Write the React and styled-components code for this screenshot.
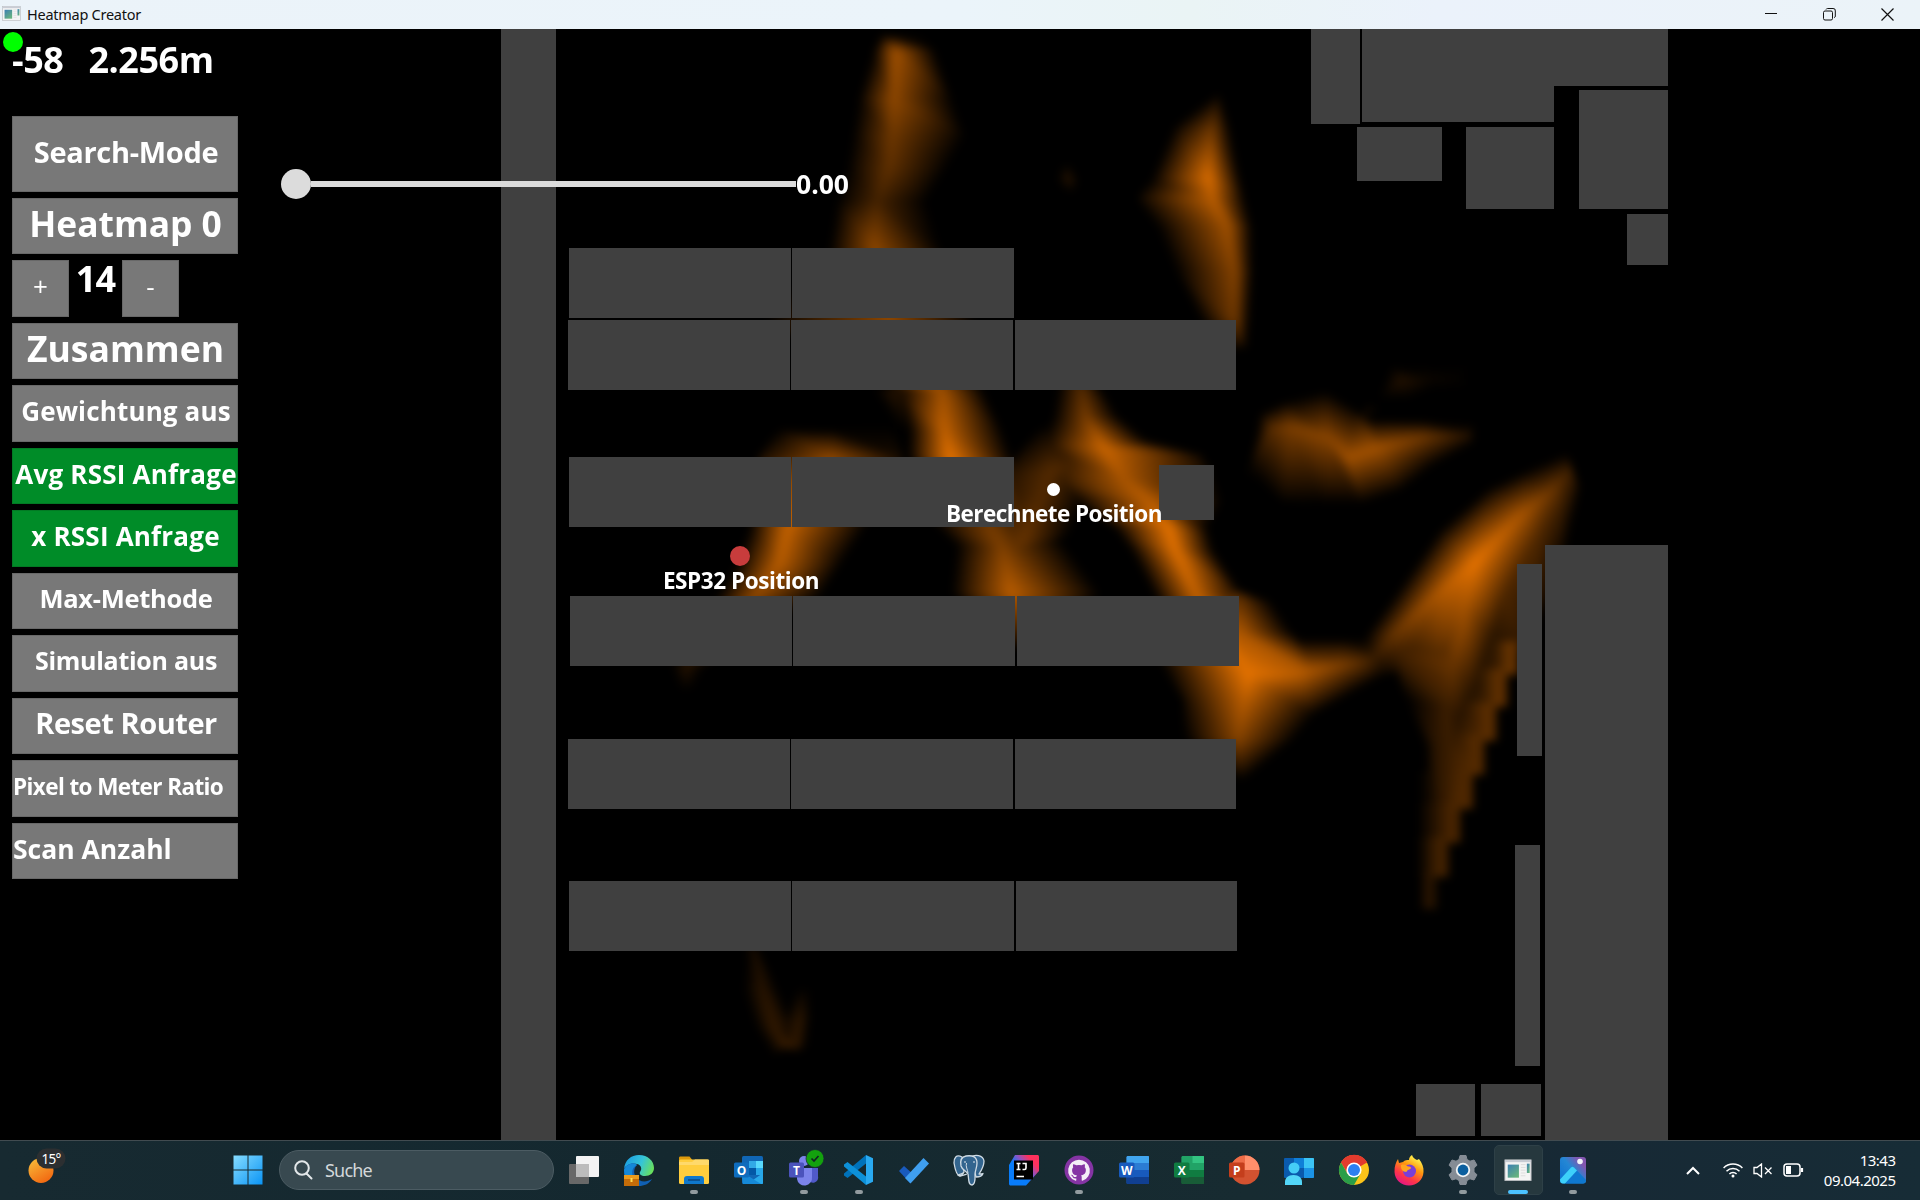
import React, { useLayoutEffect, useRef } from "react";
import styled, { createGlobalStyle, css } from "styled-components";

const Global = createGlobalStyle`
  * { box-sizing: border-box; }
  html, body { margin: 0; background: #000; overflow: hidden; }
`;

const Desktop = styled.div`
  width: 1920px;
  height: 1200px;
  display: flex;
  flex-direction: column;
  background: #000;
  font-family: "Open Sans", "Noto Sans", sans-serif;
`;

/* ---------- title bar ---------- */

const TitleBar = styled.header`
  height: 29px;
  flex: none;
  display: flex;
  align-items: center;
  padding: 0 3px 1px 2px;
  background: linear-gradient(90deg, #ebf3f9 0%, #ebf4fa 50%, #eaf4f5 62%, #ebf2fb 75%, #ebf3f8 100%);
`;

const Title = styled.span`
  flex: 1;
  margin-left: 6px;
  font: 400 14.5px "Noto Sans", sans-serif;
  letter-spacing: -0.26px;
  color: #111;
`;

const WindowButton = styled.div`
  width: 58.5px;
  height: 29px;
  display: flex;
  align-items: center;
  justify-content: center;
`;

/* ---------- workspace ---------- */

const Workspace = styled.main`
  position: relative;
  height: 1111px;
  flex: none;
  display: flex;
  overflow: hidden;
  background: #000;
`;

const Sidebar = styled.aside`
  position: relative;
  width: 239px;
  padding: 0 0 0 12px;
  display: flex;
  flex-direction: column;
  gap: 6px;
  color: #fff;
  font-weight: 700;
`;

const Readout = styled.div`
  height: 81px;
  display: flex;
  gap: 25px;
  font-size: 36px;
  line-height: 61px;
  font-weight: 700;
  letter-spacing: -0.45px;
`;

const Button = styled.div`
  width: ${(p) => p.$w || 226}px;
  height: ${(p) => p.$h || 56.5}px;
  flex: none;
  display: flex;
  align-items: center;
  justify-content: ${(p) => (p.$left ? "flex-start" : "center")};
  padding: 0 0 ${(p) => p.$lift ?? 5}px ${(p) => p.$pad || 0}px;
  border: 1px solid ${(p) => (p.$on ? "#027a24" : "#686868")};
  background: ${(p) => (p.$on ? "#008c28" : "#787878")};
  font-size: ${(p) => p.$fs}px;
  font-weight: ${(p) => p.$weight || 700};
  letter-spacing: ${(p) => p.$ls || 0}px;
  line-height: 1;
  white-space: nowrap;
`;

const Stepper = styled.div`
  display: flex;
  height: 56.5px;
  flex: none;
`;

const StepValue = styled.span`
  width: 53px;
  text-align: center;
  font-size: 36px;
  line-height: 37px;
  letter-spacing: -0.8px;
`;

const Slider = styled.div`
  position: absolute;
  left: 281px;
  top: 139px;
  display: flex;
  align-items: center;
  height: 32px;
`;

const Knob = styled.div`
  width: 30px;
  height: 30px;
  border-radius: 50%;
  background: #dcdcdc;
`;

const Track = styled.div`
  width: 485px;
  height: 6px;
  background: #dcdcdc;
`;

const SliderValue = styled.span`
  color: #fff;
  font-size: 26.5px;
  font-weight: 700;
  line-height: 30px;
  letter-spacing: 0;
`;

const Dot = styled.div`
  position: absolute;
  left: ${(p) => p.$x - p.$r}px;
  top: ${(p) => p.$y - p.$r - 29}px;
  width: ${(p) => p.$r * 2}px;
  height: ${(p) => p.$r * 2}px;
  border-radius: 50%;
  background: ${(p) => p.$c};
`;

const MarkerLabel = styled.span`
  position: absolute;
  left: ${(p) => p.$x}px;
  top: ${(p) => p.$y - 29}px;
  transform: translate(-50%, -50%);
  color: #fff;
  font-size: 22.5px;
  font-weight: 700;
  letter-spacing: ${(p) => p.$ls}px;
  white-space: nowrap;
`;

const Wall = styled.div`
  position: absolute;
  left: ${(p) => p.$b[0]}px;
  top: ${(p) => p.$b[1] - 29}px;
  width: ${(p) => p.$b[2] - p.$b[0]}px;
  height: ${(p) => p.$b[3] - p.$b[1]}px;
  background: #404040;
`;

const HeatCanvas = styled.canvas`
  position: absolute;
  left: 0;
  top: 0;
  filter: blur(4px);
`;

/* [left, top, right, bottom] in window pixels */
const walls = [
  [501, 29, 556, 1140],
  [569, 248, 791, 317.5], [792, 248, 1014, 317.5],
  [568, 320, 790, 390], [791, 320, 1013, 390], [1015, 320, 1236, 390],
  [569, 457, 791, 527], [792, 457, 1014, 527], [1159, 465, 1214, 520],
  [570, 596, 792, 665.5], [793, 596, 1015, 665.5], [1017, 596, 1239, 665.5],
  [568, 739, 790, 809], [791, 739, 1013, 809], [1015, 739, 1236, 809],
  [569, 881, 791, 951], [792, 881, 1014, 951], [1016, 881, 1237, 951],
  [1311, 29, 1360, 124], [1362, 29, 1554, 122], [1553, 29, 1668, 86],
  [1357, 127, 1442, 181], [1466, 127, 1554, 209], [1579, 90, 1668, 209],
  [1627, 214, 1668, 265], [1544.5, 545, 1668, 1140], [1517, 564, 1542, 756],
  [1515, 845, 1540, 1066], [1416, 1084, 1475, 1136], [1481, 1084, 1541, 1136],
];

/* Signal samples: each strip is a list of rows, each row a list of [x, y, strength] */
const strips = [
  [
    [[880, 34, 0], [893, 36, 0.1], [926, 36, 0]],
    [[872, 50, 0], [894, 50, 0.7], [934, 48, 0]],
    [[857, 98, 0], [892, 98, 0.62], [952, 98, 0]],
    [[851, 135, 0], [891, 135, 0.48], [965, 135, 0]],
    [[846, 165, 0], [888, 165, 0.42], [948, 165, 0]],
    [[836, 200, 0], [876, 200, 0.3], [926, 200, 0]],
    [[828, 247, 0], [873, 245, 0.6], [940, 247, 0]],
    [[762, 320, 0], [888, 320, 0.62], [974, 320, 0]],
    [[896, 390, 0], [941, 390, 0.7], [983, 390, 0]],
    [[908, 430, 0], [943, 430, 0.84], [1002, 430, 0]],
    [[907, 457, 0], [949, 458, 1], [1012, 457, 0]],
    [[930, 520, 0], [985, 520, 0.5], [1040, 520, 0]],
    [[955, 545, 0], [1000, 545, 0.55], [1065, 545, 0]],
    [[950, 592, 0], [1010, 592, 0.8], [1100, 592, 0]],
    [[980, 645, 0], [1016, 645, 0.1], [1050, 645, 0]],
  ],
  [[[872, 388, 0], [890, 388, 0.16], [912, 388, 0.1]], [[890, 430, 0], [900, 430, 0], [915, 430, 0]]],
  [
    [[778, 428, 0], [832, 430, 0.02], [890, 424, 0]],
    [[757, 457, 0.1], [832, 457, 0.62], [902, 457, 0.1]],
    [[752, 490, 0], [800, 490, 0.85], [890, 490, 0]],
    [[748, 527, 0], [786, 527, 0.85], [865, 527, 0]],
    [[736, 562, 0], [778, 562, 0.8], [842, 562, 0]],
    [[716, 595, 0], [754, 595, 0.62], [820, 595, 0]],
    [[670, 665, 0], [685, 665, 0.16], [705, 665, 0]],
    [[672, 690, 0], [680, 690, 0], [690, 690, 0]],
  ],
  [
    [[1040, 425, 0], [1065, 435, 0.1], [1095, 430, 0.2]],
    [[1000, 475, 0.12], [1050, 470, 0.36], [1085, 460, 0.25]],
    [[995, 500, 0.15], [1040, 500, 0.36], [1085, 500, 0]],
    [[980, 535, 0.3], [1020, 545, 0.45], [1068, 535, 0]],
  ],
  [
    [[1058, 380, 0], [1079, 380, 0.33], [1096, 380, 0]],
    [[1052, 415, 0], [1085, 415, 0.52], [1117, 415, 0]],
    [[1038, 445, 0], [1102, 446, 0.88], [1147, 440, 0]],
    [[1032, 475, 0], [1122, 477, 0.74], [1200, 455, 0.1]],
    [[1074, 500, 0], [1150, 502, 0.82], [1222, 500, 0]],
    [[1114, 528, 0], [1168, 527, 1], [1207, 528, 0]],
    [[1130, 550, 0], [1175, 550, 0.97], [1213, 550, 0]],
    [[1154, 596, 0], [1196, 596, 0.85], [1244, 596, 0]],
    [[1160, 665, 0], [1243, 665, 1], [1300, 645, 0]],
  ],
  [[[1155, 444, 0], [1180, 450, 0], [1212, 455, 0]], [[1155, 468, 0.38], [1185, 468, 0.3], [1218, 468, 0]]],
  [
    [[1190, 590, 0.2], [1239, 592, 0.35], [1272, 602, 0]],
    [[1190, 630, 0.6], [1240, 632, 0.75], [1292, 632, 0]],
    [[1160, 664, 0], [1247, 674, 1], [1310, 670, 0.72]],
    [[1184, 700, 0.1], [1243, 700, 0.8], [1328, 697, 0]],
    [[1184, 738, 0], [1237, 738, 0.58], [1294, 738, 0]],
    [[1225, 780, 0], [1239, 780, 0], [1246, 777, 0]],
  ],
  [
    [[1245, 615, 0], [1245, 674, 1], [1240, 740, 0]],
    [[1290, 638, 0], [1298, 672, 0.82], [1312, 715, 0]],
    [[1345, 638, 0], [1340, 664, 0.55], [1352, 692, 0]],
    [[1382, 642, 0.1], [1380, 656, 0.2], [1388, 672, 0]],
  ],
  [
    [[1216, 92, 0], [1219, 92, 0], [1223, 95, 0]],
    [[1173, 125, 0], [1211, 130, 0.5], [1229, 125, 0]],
    [[1150, 178, 0], [1208, 177, 0.94], [1239, 175, 0]],
    [[1137, 197, 0.05], [1212, 197, 0.82], [1244, 197, 0]],
    [[1155, 225, 0], [1227, 225, 0.7], [1251, 225, 0]],
    [[1174, 270, 0], [1234, 270, 0.58], [1252, 270, 0]],
    [[1200, 320, 0], [1234, 320, 0.48], [1249, 320, 0]],
    [[1225, 350, 0], [1238, 345, 0.12], [1246, 350, 0]],
  ],
  [[[1060, 165, 0], [1068, 162, 0], [1076, 165, 0]], [[1056, 180, 0], [1068, 178, 0.17], [1078, 180, 0]], [[1062, 192, 0], [1068, 192, 0], [1074, 190, 0]]],
  [
    [[1254, 440, 0], [1250, 462, 0.06], [1244, 474, 0]],
    [[1259, 412, 0], [1270, 427, 0.38], [1264, 486, 0]],
    [[1285, 400, 0], [1290, 426, 0.54], [1282, 500, 0.03]],
    [[1325, 390, 0], [1326, 436, 0.6], [1322, 503, 0]],
    [[1354, 410, 0.05], [1346, 457, 0.7], [1360, 503, 0]],
    [[1372, 421, 0.05], [1376, 447, 0.7], [1400, 490, 0]],
    [[1425, 420, 0], [1422, 436, 0.48], [1434, 464, 0]],
    [[1474, 424, 0], [1470, 434, 0.15], [1474, 442, 0]],
  ],
  [[[1355, 418, 0], [1368, 402, 0], [1378, 400, 0]], [[1362, 422, 0], [1368, 412, 0.13], [1380, 408, 0]]],
  [
    [[1378, 395, 0], [1380, 398, 0], [1385, 402, 0]],
    [[1390, 365, 0], [1400, 379, 0.15], [1408, 398, 0]],
    [[1425, 365, 0], [1430, 378, 0.05], [1430, 388, 0]],
    [[1470, 362, 0], [1460, 376, 0.02], [1470, 386, 0]],
  ],
  [
    [[1566, 452, 0], [1571, 468, 0.25], [1575, 478, 0.17], [1579, 490, 0]],
    [[1524, 470, 0], [1550, 490, 0.48], [1561, 505, 0.25], [1570, 528, 0]],
    [[1486, 488, 0], [1520, 514, 0.74], [1537, 535, 0.35], [1562, 565, 0]],
    [[1438, 530, 0], [1474, 561, 1], [1505, 590, 0.34], [1540, 610, 0.12]],
    [[1415, 590, 0.2], [1464, 607, 0.72], [1492, 635, 0.18], [1520, 650, 0.2]],
    [[1390, 650, 0.25], [1452, 665, 0.45], [1473, 690, 0.16], [1505, 675, 0.3]],
    [[1406, 700, 0], [1446, 705, 0.26], [1456, 720, 0.17], [1486, 720, 0.36]],
    [[1424, 745, 0], [1434, 745, 0.18], [1450, 750, 0.26], [1472, 760, 0.36]],
    [[1424, 810, 0], [1434, 810, 0.14], [1444, 810, 0.24], [1455, 810, 0.34]],
  ],
  [
    [[1438, 530, 0], [1474, 561, 1], [1464, 607, 0.72]],
    [[1400, 585, 0], [1440, 590, 0.78], [1440, 650, 0.4]],
    [[1365, 634, 0], [1396, 630, 0.48], [1400, 670, 0.1]],
    [[1348, 655, 0], [1374, 655, 0.25], [1362, 678, 0]],
  ],
  [
    [[745, 940, 0], [751, 945, 0.12], [756, 945, 0]],
    [[743, 990, 0], [762, 990, 0.18], [776, 985, 0]],
    [[754, 1025, 0], [774, 1028, 0.22], [786, 1020, 0.08]],
    [[772, 1054, 0], [788, 1043, 0.28], [802, 1056, 0]],
  ],
  [
    [[798, 985, 0], [806, 990, 0.02], [812, 985, 0]],
    [[784, 1020, 0.04], [799, 1020, 0.2], [810, 1015, 0]],
    [[782, 1048, 0.22], [794, 1048, 0.22], [806, 1046, 0]],
  ],
];

/* Lower right edge of the covered area, one sampled row per step: [left, right, top, bottom] */
const steps = [
  [1482, 1517, 640, 673], [1464, 1506, 668, 706], [1444, 1495, 702, 739], [1426, 1483, 735, 774],
  [1418, 1472, 770, 807], [1417, 1459, 803, 841], [1416, 1447, 837, 875], [1418, 1435, 871, 907],
];

const stepStrips = steps.map(([l, r, t, b], i) => {
  const v = 0.45 - i * 0.025 - (i === 7 ? 0.1 : 0);
  return [t, b].map((y) => [[l, y, 0], [r - 9, y, v], [r - 1, y, v * 0.85], [r + 2, y, 0]]);
});

const W = 960;
const H = 556;

function fillTriangle(field, a, b, c) {
  const [ax, ay, av] = [a[0] / 2, (a[1] - 29) / 2, a[2]];
  const [bx, by, bv] = [b[0] / 2, (b[1] - 29) / 2, b[2]];
  const [cx, cy, cv] = [c[0] / 2, (c[1] - 29) / 2, c[2]];
  const det = (by - cy) * (ax - cx) + (cx - bx) * (ay - cy);
  if (Math.abs(det) < 1e-6) return;
  const x0 = Math.max(0, Math.floor(Math.min(ax, bx, cx)));
  const x1 = Math.min(W - 1, Math.ceil(Math.max(ax, bx, cx)));
  const y0 = Math.max(0, Math.floor(Math.min(ay, by, cy)));
  const y1 = Math.min(H - 1, Math.ceil(Math.max(ay, by, cy)));
  for (let y = y0; y <= y1; y++) {
    for (let x = x0; x <= x1; x++) {
      const p = ((by - cy) * (x - cx) + (cx - bx) * (y - cy)) / det;
      const q = ((cy - ay) * (x - cx) + (ax - cx) * (y - cy)) / det;
      const r = 1 - p - q;
      if (p < -0.001 || q < -0.001 || r < -0.001) continue;
      const v = p * av + q * bv + r * cv;
      const i = y * W + x;
      if (v > field[i]) field[i] = v;
    }
  }
}

function Heatmap() {
  const ref = useRef(null);
  useLayoutEffect(() => {
    const ctx = ref.current.getContext("2d");
    const field = new Float32Array(W * H);
    [...strips, ...stepStrips].forEach((rows) => {
      for (let i = 0; i + 1 < rows.length; i++) {
        for (let j = 0; j + 1 < rows[i].length; j++) {
          const [a, b, c, d] = [rows[i][j], rows[i][j + 1], rows[i + 1][j], rows[i + 1][j + 1]];
          fillTriangle(field, a, b, d);
          fillTriangle(field, a, d, c);
        }
      }
    });
    const image = ctx.createImageData(W, H);
    field.forEach((v, i) => {
      image.data[i * 4] = v * 230;
      image.data[i * 4 + 1] = v * 115;
      image.data[i * 4 + 3] = 255;
    });
    ctx.putImageData(image, 0, 0);
  }, []);
  return <HeatCanvas ref={ref} width={W} height={H} style={{ width: W * 2, height: H * 2 }} />;
}

/* ---------- taskbar ---------- */

const Taskbar = styled.footer`
  height: 60px;
  flex: none;
  display: flex;
  align-items: center;
  padding-bottom: 1px;
  border-top: 1px solid #414b50;
  background: linear-gradient(90deg, #172a31 0%, #14282f 35%, #172b31 65%, #172935 82%, #172c36 100%);
`;

const Weather = styled.div`
  width: 220px;
  padding-left: 26px;
  flex: none;
  display: flex;
  svg { overflow: visible; }
`;

const Start = styled.div`
  width: 59px;
  flex: none;
  display: flex;
  padding-left: 12.5px;
`;

const Search = styled.div`
  width: 275px;
  height: 40px;
  flex: none;
  display: flex;
  align-items: center;
  gap: 12px;
  padding-left: 14px;
  border: 1px solid #4c5c63;
  border-radius: 20px;
  background: #384950;
  color: #d3d8da;
  font: 400 18px "Noto Sans", sans-serif;
  letter-spacing: -0.8px;
`;

const Apps = styled.div`
  display: flex;
  margin-left: 2.5px;
`;

const AppCell = styled.div`
  position: relative;
  width: 54.97px;
  height: 58px;
  display: flex;
  align-items: center;
  justify-content: center;
  svg { position: relative; overflow: visible; }
  ${(p) =>
    p.$active &&
    css`
      &::before {
        content: "";
        position: absolute;
        inset: 4px 3px;
        border: 1px solid #2e4047;
        border-radius: 5px;
        background: #26383e;
      }
    `}
  &::after {
    content: "";
    display: ${(p) => (p.$open || p.$active ? "block" : "none")};
    position: absolute;
    bottom: 5px;
    width: ${(p) => (p.$active ? 20 : 8)}px;
    height: 4px;
    border-radius: 2px;
    background: ${(p) => (p.$active ? "#4cc2ff" : "#929b9f")};
  }
`;

const Tray = styled.div`
  flex: 1;
  display: flex;
  align-items: center;
  justify-content: flex-end;
  padding-right: 24.5px;
`;

const TrayIcon = styled.div`
  display: flex;
  margin-right: ${(p) => p.$mr}px;
`;

const Clock = styled.div`
  text-align: right;
  color: #fff;
  font: 400 15px/20px "Noto Sans", sans-serif;
  letter-spacing: -0.5px;
`;

const I = ({ children, s = 32 }) => (
  <svg width={s} height={s} viewBox="0 0 32 32" fill="none">
    {children}
  </svg>
);

const Letter = ({ children, x, y, size = 12 }) => (
  <text x={x} y={y} fontSize={size} fontWeight="700" fill="#fff" textAnchor="middle" fontFamily="Open Sans, sans-serif">
    {children}
  </text>
);

const WindowGlyph = ({ w }) => (
  <svg width={w} height={w * 0.8} viewBox="0 0 30 24">
    <rect x="1" y="1" width="28" height="22" fill="#f4f4f4" stroke="#b9bcc0" />
    <rect x="1" y="1" width="28" height="2.4" fill="#c8ccd4" />
    <rect x="4" y="6" width="12" height="14" fill="url(#glyphA)" />
    <path d="M18 6h5M18 9h5M18 12h5M18 15h5M18 18h5" stroke="#dcdcdc" />
    <rect x="24.5" y="5" width="3" height="10" fill="url(#glyphA)" />
    <defs>
      <linearGradient id="glyphA" x2="0.7" y2="1">
        <stop stopColor="#3c7fb4" />
        <stop offset="1" stopColor="#66b37e" />
      </linearGradient>
    </defs>
  </svg>
);

const TaskView = () => (
  <I>
    <rect x="1" y="10" width="20" height="20" rx="1" fill="#686868" />
    <rect x="8" y="2" width="23" height="21" rx="1" fill="#f3f3f3" />
    <rect x="8" y="10" width="13" height="13" fill="#bcbcbc" />
  </I>
);

const Edge = () => (
  <I>
    <defs>
      <linearGradient id="eA" x1="0" x2="1" y1="0.3" y2="0.6">
        <stop stopColor="#1b9de2" /><stop offset="0.55" stopColor="#35c4d8" /><stop offset="1" stopColor="#6ae05a" />
      </linearGradient>
    </defs>
    <path d="M1 15C2 6 8 1 16 1c9 0 15 6 15 13 0 5-4 8-9 8-4 0-6-2-5-4 2-2 2-7-3-8-6-1-11 1-13 5z" fill="url(#eA)" />
    <path d="M1 16c2-6 9-8 13-5-3 3-4 8-1 12 3 5 10 6 16 2-3 5-8 7-13 7C7 31 0 25 1 16z" fill="#1060b4" />
    <path d="M1 16c2-6 9-8 13-5-4 2-6 6-4 12H2z" fill="#1588d8" />
    <rect x="1" y="21" width="15" height="11" fill="#c46c08" />
    <path d="M1 21h15v4H1z" fill="#eb9b1c" />
    <rect x="7.5" y="24" width="2" height="4" fill="#ffd94f" />
  </I>
);

const Folder = () => (
  <I>
    <path d="M1 4c0-1 .5-1.500 1.500-1.500h9L14 5.500V12H1z" fill="#dd9a0c" />
    <rect x="1" y="5.500" width="30" height="24.500" rx="1.500" fill="#ffcd3d" />
    <path d="M1 8h13l3-2.500h13c.7 0 1 .5 1 1V11H1z" fill="#ffd96b" />
    <path d="M6 30v-5c0-2 1-3 3-3h14c2 0 3 1 3 3v5z" fill="#0f78cc" />
    <path d="M10 26h12" stroke="#0a4a86" strokeWidth="1.600" />
  </I>
);

const Outlook = () => (
  <I>
    <rect x="9" y="2" width="21" height="28" rx="1.500" fill="#1066b5" />
    <path d="M16 7h7v7h-7z" fill="#32a9e7" /><path d="M23 7h7v7h-7z" fill="#58d9fd" />
    <path d="M16 14h7v7h-7z" fill="#0358a7" /><path d="M23 14h7v7h-7z" fill="#28a8ea" />
    <path d="M9 18l11 8 10-7v10c0 .6-.4 1-1 1H10z" fill="#28a8ea" />
    <path d="M9 18l19 12H10z" fill="#1689d8" />
    <rect x="1" y="8.500" width="15" height="15" rx="1.500" fill="#0f6cbd" />
    <Letter x={8.500} y={20.500}>O</Letter>
  </I>
);

const Teams = () => (
  <svg width="36" height="36" viewBox="0 0 36 36">
    <circle cx="28" cy="11" r="4" fill="#5059c9" /><path d="M22 16h10v8a5 5 0 0 1-10 3z" fill="#5059c9" />
    <circle cx="18" cy="9" r="5" fill="#7b83eb" />
    <path d="M11 16h15v9a7.500 7.500 0 0 1-15 2z" fill="#7b83eb" />
    <rect x="3" y="10.500" width="15" height="15" rx="1.500" fill="#4b53bc" />
    <Letter x={10.500} y={22.500}>T</Letter>
    <circle cx="29" cy="6.500" r="9" fill="#13a10e" stroke="#182b32" strokeWidth="0.800" />
    <path d="M25.500 6.500l2.500 2.500 4.500-5" stroke="#122" strokeWidth="1.700" fill="none" />
  </svg>
);

const VsCode = () => (
  <I>
    <path d="M23 1l7 3.300v23.400L23 31z" fill="#29a9f0" />
    <path d="M23 1v8.500L4.500 24 1 21.500v-2z" fill="#0072ba" />
    <path d="M1 12.500v-2L4.500 8 23 22.500V31z" fill="#0d90d8" />
  </I>
);

const Todo = () => (
  <I>
    <path d="M1 17l5-5 10 9-4 8z" fill="#195abd" />
    <path d="M7 24L25.500 4l5.500 5.500L12.500 29.500z" fill="#3f9ff0" />
  </I>
);

const Postgres = () => (
  <I>
    <g fill="#33658f" stroke="#cfdbe4" strokeWidth="1.300" strokeLinejoin="round">
      <path d="M18 3c4-3 12-2 13 4 0 5-3 10-5 13 2 0 3 0 4-.5-1 3-4 3.500-7 3.500z" />
      <path d="M9 3C3 0 1 4 1 9c1 6 3 13 6 13 2 0 3-3 4-4z" />
      <path d="M15 20c-1-3-6-4-7-8-1-5 0-9 5-10 7-1 11 1 11 7 0 5-2 8-2 11 0 4 1 10-3 11-4 0-3-6-4-11z" />
      <path d="M14 20c-3 1-6 3-9 1 2-1 4-1 5-2" fill="none" />
    </g>
    <path d="M13.500 9c-1 4 1 6 1.500 10" stroke="#cfdbe4" />
    <circle cx="12" cy="8" r="0.800" fill="#fff" /><circle cx="21" cy="8" r="0.800" fill="#fff" />
  </I>
);

const Idea = () => (
  <I>
    <defs>
      <linearGradient id="ij" x1="0.1" y1="0.800" x2="0.900" y2="0.100">
        <stop offset="0.350" stopColor="#087cfa" /><stop offset="0.600" stopColor="#8a55c8" /><stop offset="0.850" stopColor="#fe315d" />
      </linearGradient>
    </defs>
    <path d="M7 1h22c1.500 0 2 .5 2 2v14L18 31.500H3c-1.500 0-2-.5-2-2V11z" fill="url(#ij)" />
    <rect x="6" y="6.500" width="19" height="19" fill="#000" />
    <path d="M8.500 9.500h4M10.500 9.500v6M8.500 15.500h4M14.500 9.500h3.500v4.500c0 1-.6 1.500-1.500 1.500h-2M8.500 22.500h7.500" stroke="#fff" strokeWidth="1.600" />
  </I>
);

const Github = () => (
  <I>
    <circle cx="16" cy="16" r="14.500" fill="#8534a4" />
    <path transform="translate(5.200 5.500) scale(0.900)" fill="#f4eef7" d="M12 .3a12 12 0 0 0-3.800 23.400c.6.100.8-.3.800-.6v-2c-3.300.7-4-1.600-4-1.600-.6-1.400-1.400-1.800-1.400-1.800-1-.7.100-.7.100-.7 1.200 0 1.900 1.200 1.900 1.200 1 1.800 2.800 1.300 3.500 1 0-.8.400-1.300.7-1.600-2.700-.3-5.500-1.300-5.500-6 0-1.200.5-2.300 1.300-3.100-.2-.4-.6-1.600 0-3.200 0 0 1-.3 3.400 1.200a11.500 11.500 0 0 1 6 0c2.300-1.500 3.300-1.200 3.300-1.200.6 1.600.2 2.800 0 3.200.9.800 1.300 1.900 1.300 3.200 0 4.600-2.800 5.600-5.500 5.900.5.400.9 1 .9 2.200v3.300c0 .3.100.7.800.6A12 12 0 0 0 12 .3" />
  </I>
);

const Office = ({ c, letter, round }) => (
  <I>
    {round ? (
      <g>
        <circle cx="17" cy="16" r="14.500" fill={c[2]} />
        <path d="M17 1.500A14.500 14.500 0 0 0 2.500 16H17z" fill={c[0]} /><path d="M17 1.500A14.500 14.500 0 0 1 31.500 16H17z" fill={c[1]} />
      </g>
    ) : (
      <g>
        <rect x="8.500" y="2" width="22.500" height="28" rx="1.500" fill={c[2]} />
        <path d="M8.500 9V3.500c0-1 .5-1.500 1.500-1.500h20c.7 0 1 .3 1 1v6z" fill={c[0]} />
        <path d="M8.500 9H31v7H8.500z" fill={c[1]} />
        <path d="M8.500 23H31v6c0 .7-.3 1-1 1H10c-1 0-1.500-.5-1.500-1.500z" fill={c[3]} />
        {c[5] && <path d="M19.500 2H30c.7 0 1 .3 1 1v6H19.500z" fill={c[5]} />}
      </g>
    )}
    <rect x="1" y="8.500" width="15.500" height="15" rx="1.500" fill={c[4]} />
    <Letter x={8.700} y={20.500}>{letter}</Letter>
  </I>
);

const People = () => (
  <I>
    <rect x="1" y="4" width="20" height="20" rx="1" fill="#0a5aad" />
    <path d="M11 4h10v10H11z" fill="#0f7fd8" />
    <path d="M21 4h9c.6 0 1 .4 1 1v9H21z" fill="#3cc4f5" /><path d="M21 14h10v9c0 .6-.4 1-1 1h-9z" fill="#1b93e6" />
    <circle cx="11" cy="14" r="5.500" fill="#45cdf7" />
    <path d="M2 31v-3c0-4 3-7 8.500-7s8.500 3 8.500 7v3z" fill="#53d6f8" />
  </I>
);

const Chrome = () => (
  <I>
    <circle cx="16" cy="16" r="15" fill="#fcc419" />
    <path d="M3 8.500A15 15 0 0 1 29 8.500L16 16z" fill="#e33b2e" />
    <path d="M16 8.500h13.200A15 15 0 0 0 3 8.500l6.500 11z" fill="#e33b2e" />
    <path d="M3 8.500A15 15 0 0 0 16 31l6.500-11.300L9.500 19.700z" fill="#2a9e48" />
    <circle cx="16" cy="16" r="7.600" fill="#fff" /><circle cx="16" cy="16" r="6" fill="#2d7ff0" />
  </I>
);

const Firefox = () => (
  <I>
    <defs>
      <linearGradient id="ff" x1="0.800" y1="0.100" x2="0.300" y2="1">
        <stop stopColor="#fff44f" /><stop offset="0.350" stopColor="#ff980e" /><stop offset="0.700" stopColor="#ff3647" /><stop offset="1" stopColor="#e31587" />
      </linearGradient>
    </defs>
    <path d="M5 5l1 4 4-1c2-2 4-2 6-2 0-2 1-4 3-5 1 3 3 4 5 5l2-1c3 4 5 8 4.500 13C30 26 24 31.500 16 31.500S2 26 1.500 18C1.300 12 3 8 5 5z" fill="url(#ff)" />
    <circle cx="16.500" cy="17" r="6.500" fill="#7a3fd8" />
    <path d="M8 11c3-1 5 0 7 1.500 2 0 3 .5 3 1.500-1 2-4 1.500-4.500 4-4 0-6-3-5.500-7z" fill="#ffa51f" />
  </I>
);

const Gear = () => (
  <I>
    <path
      d="M13 1.500h6l1 4 3 1.700 4-1.200 3 5.200-3 2.900v3.800l3 2.900-3 5.200-4-1.200-3 1.700-1 4h-6l-1-4-3-1.700-4 1.200-3-5.200 3-2.900v-3.800l-3-2.900L5 6l4 1.200 3-1.700z"
      fill="#858c95"
      stroke="#858c95"
      strokeLinejoin="round"
    />
    <circle cx="16" cy="16" r="7.200" fill="#f2f5f7" /><circle cx="16" cy="16" r="5.400" fill="#0b5f9f" />
  </I>
);

const Photos = () => (
  <I>
    <defs>
      <linearGradient id="ph" x1="0.200" y1="0.900" x2="0.900" y2="0.300">
        <stop stopColor="#1275d2" /><stop offset="0.550" stopColor="#2487d4" /><stop offset="1" stopColor="#8356b0" />
      </linearGradient>
    </defs>
    <rect x="3" y="3" width="26" height="26.500" rx="3" fill="url(#ph)" />
    <path d="M3 25l11-11.500c1-1 2-1 3 0l12 12.500c0 2-1 3.500-3 3.500H9z" fill="#0f78d0" />
    <path d="M3 25.500L14 13.500c1-1 2-1 3 0l3 3L8 29.500H6c-2 0-3-1.500-3-4z" fill="#3dd0fa" />
    <circle cx="23" cy="7.500" r="2.800" fill="#f1f4fb" />
  </I>
);

const apps = [
  { el: <TaskView /> }, { el: <Edge /> }, { el: <Folder />, open: true }, { el: <Outlook /> },
  { el: <Teams />, open: true }, { el: <VsCode />, open: true }, { el: <Todo /> }, { el: <Postgres /> },
  { el: <Idea /> }, { el: <Github />, open: true },
  { el: <Office letter="W" c={["#41a5ee", "#2b7cd3", "#185abd", "#103f91", "#185abd"]} /> },
  { el: <Office letter="X" c={["#21a366", "#21a366", "#107c41", "#185c37", "#107c41", "#33c481"]} /> },
  { el: <Office letter="P" round c={["#ed6c47", "#ff8f6b", "#d35230", "", "#c43e1c"]} /> },
  { el: <People /> }, { el: <Chrome /> }, { el: <Firefox /> }, { el: <Gear />, open: true },
  { el: <WindowGlyph w={28} />, active: true }, { el: <Photos />, open: true },
];

export default function App() {
  return (
    <Desktop>
      <Global />
      <TitleBar>
        <WindowGlyph w={19} />
        <Title>Heatmap Creator</Title>
        <WindowButton>
          <svg width="12" height="12"><path d="M0 5.500h12" stroke="#111" /></svg>
        </WindowButton>
        <WindowButton>
          <svg width="13" height="13" fill="none" stroke="#111">
            <rect x="0.500" y="3" width="9" height="9" rx="1.500" />
            <path d="M3 1.500C3.300.800 3.900.500 4.600.500H10A2.200 2.200 0 0 1 12.300 3v5c0 .8-.3 1.400-1 1.700" />
          </svg>
        </WindowButton>
        <WindowButton>
          <svg width="13" height="13"><path d="M.5.500l12 12M12.500.500l-12 12" stroke="#111" strokeWidth="1.200" /></svg>
        </WindowButton>
      </TitleBar>

      <Workspace>
        <Heatmap />
        {walls.map((b) => (
          <Wall key={b.join()} $b={b} />
        ))}
        <Dot $x={12.5} $y={41.5} $r={10} $c="#00ff00" />
        <Sidebar>
          <Readout>
            <span>-58</span>
            <span>2.256m</span>
          </Readout>
          <Button $h={75.5} $fs={29} $ls={-0.3} $pad={2}>Search-Mode</Button>
          <Button $fs={35.4} $pad={1}>Heatmap 0</Button>
          <Stepper>
            <Button $w={57} $fs={26} $weight={400}>+</Button>
            <StepValue>14</StepValue>
            <Button $w={57} $fs={26} $weight={400}>-</Button>
          </Stepper>
          <Button $fs={35.5} $pad={1}>Zusammen</Button>
          <Button $fs={26} $ls={0.15} $pad={2}>Gewichtung aus</Button>
          <Button $fs={26} $ls={0.22} $pad={2} $lift={4} $on>Avg RSSI Anfrage</Button>
          <Button $fs={26} $ls={0.2} $pad={1} $lift={4} $on>x RSSI Anfrage</Button>
          <Button $fs={25.5} $ls={-0.3} $pad={2} $lift={4}>Max-Methode</Button>
          <Button $fs={25} $ls={-0.27} $pad={2}>Simulation aus</Button>
          <Button $fs={29} $ls={-0.45} $pad={2} $lift={6}>Reset Router</Button>
          <Button $fs={22.5} $ls={-0.6} $lift={3} $left>Pixel to Meter Ratio</Button>
          <Button $fs={26.5} $lift={4} $left>Scan Anzahl</Button>
        </Sidebar>
        <Slider>
          <Knob />
          <Track />
          <SliderValue>0.00</SliderValue>
        </Slider>
        <Dot $x={1053.5} $y={489} $r={6.5} $c="#fff" />
        <MarkerLabel $x={1054} $y={512.5} $ls={-0.57}>Berechnete Position</MarkerLabel>
        <Dot $x={740} $y={556} $r={10} $c="#c83c3c" />
        <MarkerLabel $x={741} $y={580} $ls={-0.43}>ESP32 Position</MarkerLabel>
      </Workspace>

      <Taskbar>
        <Weather>
          <svg width="42" height="40" viewBox="0 0 42 40">
            <defs>
              <linearGradient id="moon" x2="0.600" y2="1">
                <stop stopColor="#f8c13c" /><stop offset="1" stopColor="#f26a12" />
              </linearGradient>
            </defs>
            <circle cx="15" cy="20.500" r="12.500" fill="url(#moon)" />
            <rect x="10.500" y="-1.500" width="29" height="20" rx="10" fill="#2c2f31" />
            <text x="25" y="13.500" fontSize="13.500" fill="#fff" textAnchor="middle" letterSpacing="-0.800" fontFamily="Noto Sans, sans-serif">15°</text>
          </svg>
        </Weather>
        <Start>
          <svg width="30" height="30">
            <defs>
              <linearGradient id="win" x2="1" y2="1">
                <stop stopColor="#86dcff" /><stop offset="1" stopColor="#0a94f5" />
              </linearGradient>
            </defs>
            <path d="M.5.500h14v14H.5zM15.500.500h14v14h-14zM.5 15.500h14v14H.5zM15.500 15.500h14v14h-14z" fill="url(#win)" />
          </svg>
        </Start>
        <Search>
          <svg width="19" height="20" fill="none" stroke="#e4e8ea" strokeWidth="2">
            <circle cx="8" cy="8" r="6.800" /><path d="M12.500 13.500l5 5" strokeLinecap="round" />
          </svg>
          Suche
        </Search>
        <Apps>
          {apps.map((a, i) => (
            <AppCell key={i} $open={a.open} $active={a.active}>
              {a.el}
            </AppCell>
          ))}
        </Apps>
        <Tray>
          <TrayIcon $mr={23}>
            <svg width="14" height="9"><path d="M1 8l6-6 6 6" fill="none" stroke="#fff" strokeWidth="2" /></svg>
          </TrayIcon>
          <TrayIcon $mr={10}>
            <svg width="20" height="16" fill="none" stroke="#fff" strokeWidth="1.500">
              <path d="M.6 6a13.300 13.300 0 0 1 18.800 0M3.500 9.200a9.200 9.200 0 0 1 13 0M6.400 12a5 5 0 0 1 7.200 0" />
              <circle cx="10" cy="14" r="1.500" fill="#fff" stroke="none" />
            </svg>
          </TrayIcon>
          <TrayIcon $mr={10}>
            <svg width="20" height="15" fill="none" stroke="#fff" strokeWidth="1.300">
              <path d="M1 4.500h3L8.500 1v13L4 10.500H1zM12 4.500l6.500 6.500M18.500 4.500L12 11" />
            </svg>
          </TrayIcon>
          <TrayIcon $mr={19.5}>
            <svg width="21" height="14" fill="none" stroke="#fff" strokeWidth="1.500">
              <rect x="1" y="1" width="16" height="12" rx="3" />
              <rect x="3" y="3" width="5" height="8" fill="#fff" stroke="none" /><path d="M19 5v4" strokeWidth="2.200" />
            </svg>
          </TrayIcon>
          <Clock>
            <div>13:43</div>
            <div>09.04.2025</div>
          </Clock>
        </Tray>
      </Taskbar>
    </Desktop>
  );
}
